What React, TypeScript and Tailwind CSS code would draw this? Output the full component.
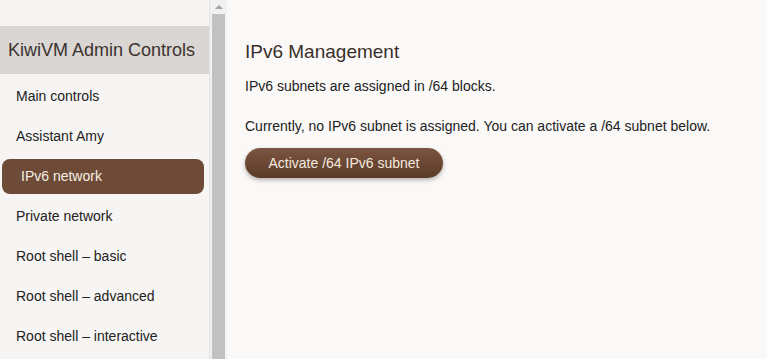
const items = [
  "Main controls",
  "Assistant Amy",
  "IPv6 network",
  "Private network",
  "Root shell – basic",
  "Root shell – advanced",
  "Root shell – interactive",
]

function Sidebar() {
  return (
    <div className="flex h-full">
      <div className="w-[209px] bg-[#f6f5f3] pt-[26px]">
        <div className="flex h-12 items-center bg-[#dad6d3] px-2 text-[18px] text-[#3a322e]">
          KiwiVM Admin Controls
        </div>
        <ul className="pt-[2px] text-[14px] text-[#222]">
          {items.map((label) =>
            label === "IPv6 network" ? (
              <li
                key={label}
                className="mb-[2px] ml-[2px] mr-[5px] mt-[3px] flex h-[35px] items-center rounded-lg bg-[#6e4b36] pl-[19px] text-[#f7efe6]"
              >
                {label}
              </li>
            ) : (
              <li key={label} className="flex h-10 items-center px-4">
                {label}
              </li>
            )
          )}
        </ul>
      </div>
      {/* fake scrollbar */}
      <div className="flex w-[18px] flex-col border-l border-[#e4e2e0] bg-[#f1f1f1] px-[2px]">
        <div className="flex h-[14px] items-center justify-center">
          <div className="h-0 w-0 border-x-[4px] border-b-[4px] border-x-transparent border-b-[#a3a3a3]" />
        </div>
        <div className="flex-1 bg-[#c1c1c1]" />
      </div>
    </div>
  )
}

export default function App() {
  return (
    <div
      className="flex h-[359px] w-[767px] overflow-hidden bg-[#faf9f8]"
      style={{ fontFamily: '"Liberation Sans", Arial, sans-serif' }}
    >
      <Sidebar />
      <main className="flex-1 pl-[18px] pt-[40px] text-[14px] text-[#222]">
        <h1 className="text-[19px] leading-6 text-[#3a2f2a]">IPv6 Management</h1>
        <p className="mt-[12px]">IPv6 subnets are assigned in /64 blocks.</p>
        <p className="mt-[19px]">
          Currently, no IPv6 subnet is assigned. You can activate a /64 subnet below.
        </p>
        <button
          type="button"
          className="mt-[11px] h-[30px] w-[198px] rounded-full bg-gradient-to-b from-[#7b5642] to-[#5b3a27] text-[14px] text-[#f3e9de] shadow-[0_2px_4px_rgba(0,0,0,0.3)]"
        >
          Activate /64 IPv6 subnet
        </button>
      </main>
    </div>
  )
}
